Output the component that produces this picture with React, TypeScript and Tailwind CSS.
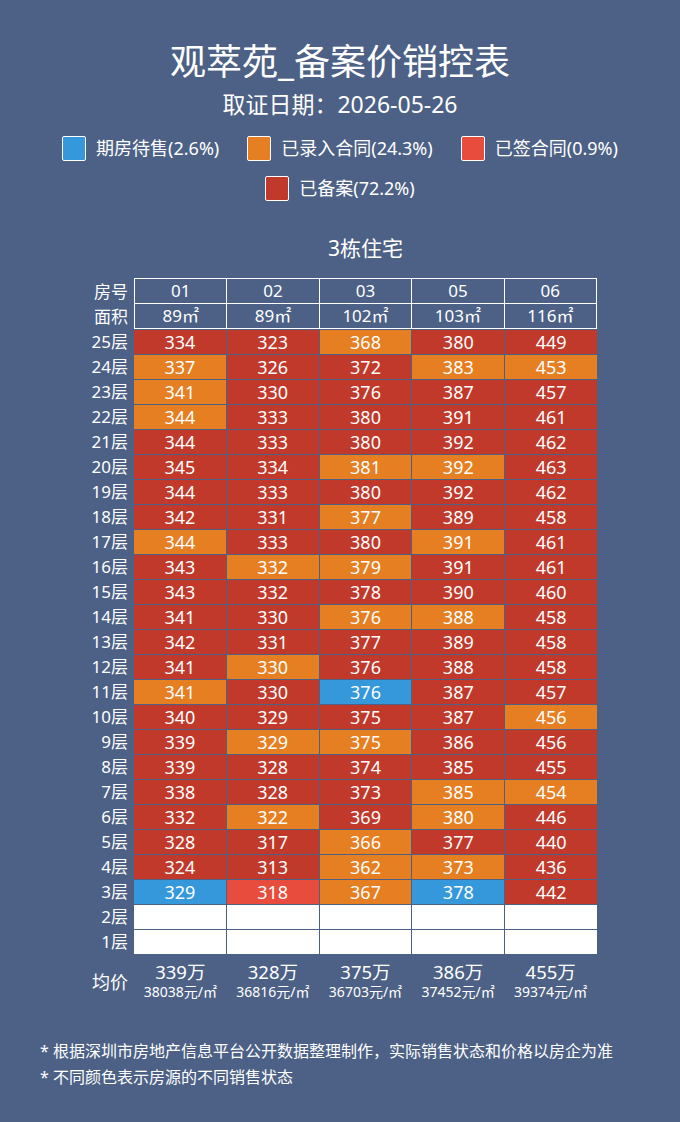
import React from "react";

type S = "r" | "o" | "l" | "b" | "w";

const rows: [string, [number, S][]][] = [
  ["25层", [[334, "r"], [323, "r"], [368, "o"], [380, "r"], [449, "r"]]],
  ["24层", [[337, "o"], [326, "r"], [372, "r"], [383, "o"], [453, "o"]]],
  ["23层", [[341, "o"], [330, "r"], [376, "r"], [387, "r"], [457, "r"]]],
  ["22层", [[344, "o"], [333, "r"], [380, "r"], [391, "r"], [461, "r"]]],
  ["21层", [[344, "r"], [333, "r"], [380, "r"], [392, "r"], [462, "r"]]],
  ["20层", [[345, "r"], [334, "r"], [381, "o"], [392, "o"], [463, "r"]]],
  ["19层", [[344, "r"], [333, "r"], [380, "r"], [392, "r"], [462, "r"]]],
  ["18层", [[342, "r"], [331, "r"], [377, "o"], [389, "r"], [458, "r"]]],
  ["17层", [[344, "o"], [333, "r"], [380, "r"], [391, "o"], [461, "r"]]],
  ["16层", [[343, "r"], [332, "o"], [379, "o"], [391, "r"], [461, "r"]]],
  ["15层", [[343, "r"], [332, "r"], [378, "r"], [390, "r"], [460, "r"]]],
  ["14层", [[341, "r"], [330, "r"], [376, "o"], [388, "o"], [458, "r"]]],
  ["13层", [[342, "r"], [331, "r"], [377, "r"], [389, "r"], [458, "r"]]],
  ["12层", [[341, "r"], [330, "o"], [376, "r"], [388, "r"], [458, "r"]]],
  ["11层", [[341, "o"], [330, "r"], [376, "b"], [387, "r"], [457, "r"]]],
  ["10层", [[340, "r"], [329, "r"], [375, "r"], [387, "r"], [456, "o"]]],
  ["9层", [[339, "r"], [329, "o"], [375, "o"], [386, "r"], [456, "r"]]],
  ["8层", [[339, "r"], [328, "r"], [374, "r"], [385, "r"], [455, "r"]]],
  ["7层", [[338, "r"], [328, "r"], [373, "r"], [385, "o"], [454, "o"]]],
  ["6层", [[332, "r"], [322, "o"], [369, "r"], [380, "o"], [446, "r"]]],
  ["5层", [[328, "r"], [317, "r"], [366, "o"], [377, "r"], [440, "r"]]],
  ["4层", [[324, "r"], [313, "r"], [362, "o"], [373, "o"], [436, "r"]]],
  ["3层", [[329, "b"], [318, "l"], [367, "o"], [378, "b"], [442, "r"]]],
];

const bgClass: Record<S, string> = {
  r: "bg-[#c0392b]",
  o: "bg-[#e67e22]",
  l: "bg-[#e74c3c]",
  b: "bg-[#3498db]",
  w: "bg-white",
};

const legend = [
  { c: "bg-[#3498db]", t: "期房待售(2.6%)" },
  { c: "bg-[#e67e22]", t: "已录入合同(24.3%)" },
  { c: "bg-[#e74c3c]", t: "已签合同(0.9%)" },
  { c: "bg-[#c0392b]", t: "已备案(72.2%)" },
];

const avgs = [
  ["339万", "38038元/㎡"],
  ["328万", "36816元/㎡"],
  ["375万", "36703元/㎡"],
  ["386万", "37452元/㎡"],
  ["455万", "39374元/㎡"],
];

function Label({ children }: { children: React.ReactNode }) {
  return (
    <div className="w-[128px] shrink-0 text-right text-[17px] leading-[25px] text-white">
      {children}
    </div>
  );
}

export default function App() {
  return (
    <div
      className="w-[680px] h-[1122px] bg-[#4c6185] text-white overflow-hidden"
      style={{ fontFamily: '"Noto Sans", "Noto Sans CJK SC", sans-serif' }}
    >
      <div className="pt-[40px] text-center text-[36px] leading-[44px]">观萃苑_备案价销控表</div>
      <div className="mt-[6px] text-center text-[23px] leading-[28px]">取证日期：2026-05-26</div>
      <div className="mt-[18px] flex flex-wrap justify-center gap-x-[28px] gap-y-[15px] px-[30px]">
        {legend.map((l) => (
          <div key={l.t} className="flex items-center gap-[10px]">
            <div className={`w-[24px] h-[25px] rounded-[2px] border border-white ${l.c}`} />
            <span className="text-[18px] leading-[25px]">{l.t}</span>
          </div>
        ))}
      </div>
      <div className="mt-[33px] flex">
        <div className="w-[134px] shrink-0" />
        <div className="w-[463px] text-center text-[21px] leading-[28px]">3栋住宅</div>
      </div>

      <div className="mt-[16px] flex flex-col">
        {/* header */}
        <div className="flex">
          <div className="flex flex-col pt-px">
            <Label>房号</Label>
            <Label>面积</Label>
          </div>
          <div className="ml-[6px] w-[463px] bg-white p-px grid grid-cols-5 gap-px">
            {["01", "02", "03", "05", "06"].map((n) => (
              <div key={n} className="h-[24px] bg-[#4c6185] flex items-center justify-center text-[17px]">
                {n}
              </div>
            ))}
            {["89㎡", "89㎡", "102㎡", "103㎡", "116㎡"].map((n, i) => (
              <div key={i} className="h-[24px] bg-[#4c6185] flex items-center justify-center text-[17px]">
                {n}
              </div>
            ))}
          </div>
        </div>
        {/* data */}
        <div className="flex">
          <div className="flex flex-col">
            {rows.map(([f]) => (
              <Label key={f}>{f}</Label>
            ))}
            <Label>2层</Label>
            <Label>1层</Label>
          </div>
          <div className="ml-[6px] w-[463px] grid grid-cols-5 gap-px bg-[#4c6185] pt-px content-start">
            {rows.map(([f, cells]) =>
              cells.map(([v, s], i) => (
                <div
                  key={f + i}
                  className={`h-[24px] flex items-center justify-center text-[18px] ${bgClass[s]}`}
                >
                  {v}
                </div>
              ))
            )}
            {Array.from({ length: 10 }).map((_, i) => (
              <div key={"w" + i} className="h-[24px] bg-white" />
            ))}
          </div>
        </div>
        {/* averages */}
        <div className="flex mt-[8px]">
          <div className="w-[128px] shrink-0 text-right text-[18px] flex items-center justify-end">均价</div>
          <div className="ml-[6px] w-[463px] grid grid-cols-5">
            {avgs.map(([a, b]) => (
              <div key={b} className="flex flex-col items-center">
                <div className="text-[18.5px] leading-[20px]">{a}</div>
                <div className="text-[14px] leading-[20px]">{b}</div>
              </div>
            ))}
          </div>
        </div>
      </div>

      <div className="mt-[36px] pl-[40px] text-[16px] leading-[26px]">
        <div>* 根据深圳市房地产信息平台公开数据整理制作，实际销售状态和价格以房企为准</div>
        <div>* 不同颜色表示房源的不同销售状态</div>
      </div>
    </div>
  );
}
